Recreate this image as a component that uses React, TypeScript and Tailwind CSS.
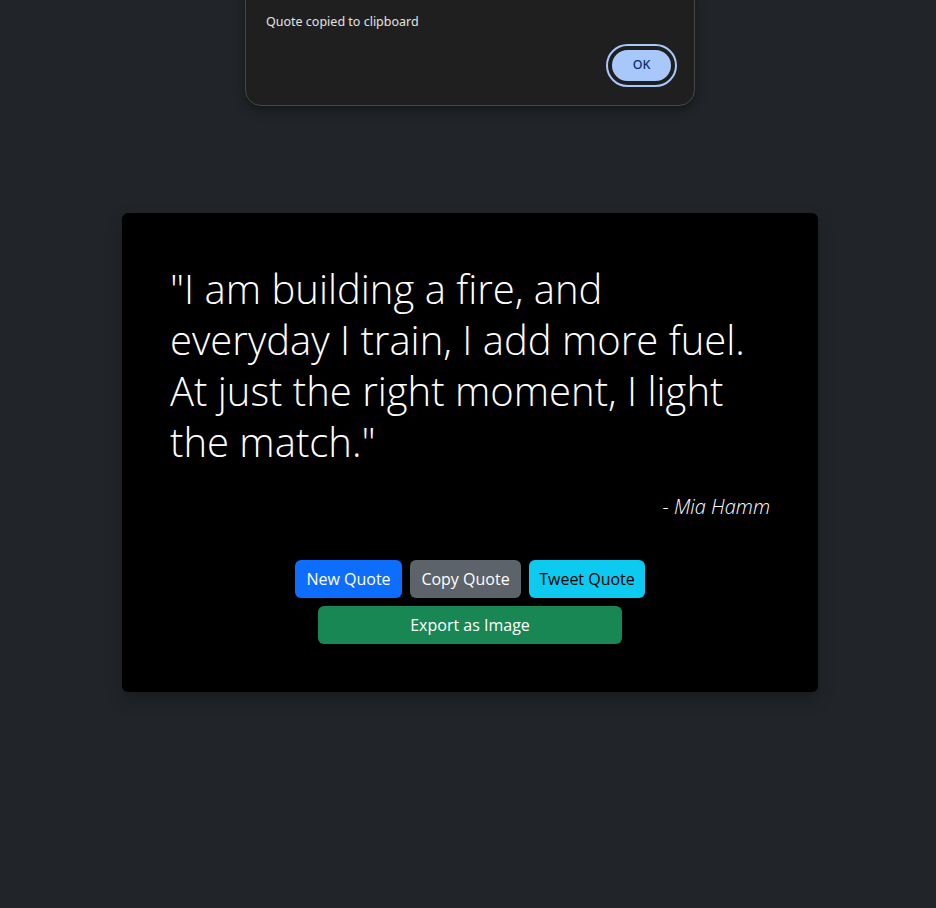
import React from "react";

export default function App() {
  const sans = { fontFamily: '"Open Sans", "Noto Sans", sans-serif' };
  return (
    <div className="relative min-h-[908px] w-full bg-[#212529]" style={sans}>
      {/* dialog */}
      <div className="absolute left-[245px] top-[-20px] w-[450px] h-[126px] rounded-[16px] border border-[#444746] bg-[#1f1f1f] shadow-[0_4px_12px_rgba(0,0,0,0.4)]">
        <div className="pl-[20px] pt-[33px] text-[12.5px] leading-[16px] text-[#e3e3e3]" style={{ fontFamily: '"Noto Sans", sans-serif' }}>
          Quote copied to clipboard
        </div>
        <div className="flex justify-end pr-[17px] pt-[14px]">
          <div className="rounded-full border-2 border-[#a8c7fa] p-[2px]">
            <div className="flex h-[35px] w-[63px] items-center justify-center rounded-full border-2 border-[#1f1f1f] bg-[#a8c7fa] text-[12.5px] font-medium text-[#062e6f]" style={{ fontFamily: '"Noto Sans", sans-serif' }}>
              OK
            </div>
          </div>
        </div>
      </div>

      <div className="flex justify-center pl-[4px] pt-[213px]">
        <div className="w-[696px] rounded-[6px] bg-black px-[48px] pt-[50px] pb-[48px] shadow-[0_8px_16px_rgba(0,0,0,0.25)]">
          <div className="text-[40px] font-light leading-[51px] text-white" style={{ fontFamily: '"Open Sans", sans-serif' }}>
            <div className="whitespace-nowrap">"I am building a fire, and</div>
            <div className="whitespace-nowrap">everyday I train, I add more fuel.</div>
            <div className="whitespace-nowrap">At just the right moment, I light</div>
            <div className="whitespace-nowrap">the match."</div>
          </div>
          <div className="mt-[28px] text-right text-[20px] font-light italic leading-[24px] text-white">
            - Mia Hamm
          </div>
          <div className="mt-[41px] flex flex-col items-center gap-[8px]">
            <div className="flex gap-[8px]">
              <button className="h-[38px] w-[107px] rounded-[6px] bg-[#0d6efd] text-[16px] text-white">New Quote</button>
              <button className="h-[38px] w-[111px] rounded-[6px] bg-[#5c636a] text-[16px] text-white">Copy Quote</button>
              <button className="h-[38px] w-[116px] rounded-[6px] bg-[#0dcaf0] text-[16px] text-black">Tweet Quote</button>
            </div>
            <button className="h-[38px] w-[304px] rounded-[6px] bg-[#198754] text-[16px] text-white">Export as Image</button>
          </div>
        </div>
      </div>
    </div>
  );
}
